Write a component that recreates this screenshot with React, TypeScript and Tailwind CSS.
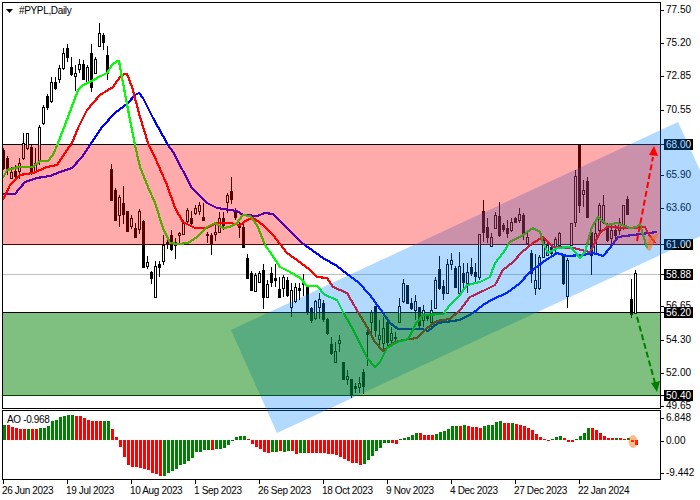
type Candle = [number, number, number, number, number];

// high, body top, body bottom, low, 1 = black body
const candles: Candle[] = [
  [148,150,168,170,1],[156,158,170,175,1],[167,172,178,179,0],[165,171,176,178,1],[158,163,171,179,0],
  [133,143,158,160,0],[133,133,148,150,0],[145,147,172,175,1],[148,163,171,173,0],[125,127,160,165,0],
  [105,107,123,125,0],[94,96,107,110,1],[77,82,101,103,0],[77,82,88,90,1],[65,68,79,83,0],
  [48,53,68,70,0],[44,48,57,62,1],[57,67,74,76,1],[65,73,76,91,0],[59,64,69,73,0],
  [60,64,79,80,1],[65,67,82,83,0],[44,53,87,92,1],[57,59,73,74,0],[23,33,46,47,0],
  [33,35,42,50,1],[46,55,73,80,1],[164,169,200,201,1],[188,190,220,221,1],[195,197,215,227,0],
  [186,203,214,224,1],[211,211,231,232,1],[215,218,226,229,0],[223,228,237,238,1],[209,211,229,234,0],
  [220,221,267,268,1],[256,262,266,269,0],[271,272,278,284,1],[261,266,297,297,0],[261,264,267,277,1],
  [235,245,261,265,0],[235,242,243,249,1],[230,235,249,251,1],[238,242,245,259,0],[232,233,235,243,0],
  [220,223,234,235,0],[208,210,221,225,0],[211,218,223,225,1],[205,208,213,215,0],[202,205,211,215,0],
  [203,217,220,221,1],[232,234,235,243,1],[233,235,244,255,1],[222,232,234,241,0],[212,218,232,232,0],
  [212,218,225,230,1],[193,195,202,213,0],[177,191,199,204,1],[208,212,217,220,1],[222,224,227,238,1],
  [223,227,247,247,1],[254,258,278,279,1],[271,273,290,291,1],[273,275,291,292,0],[271,273,282,283,0],
  [264,270,297,309,1],[280,284,297,298,0],[267,273,282,287,1],[264,278,280,287,1],[277,289,297,298,1],
  [275,277,288,297,0],[277,280,295,297,1],[283,290,307,317,0],[283,287,301,303,0],[283,288,290,300,1],
  [274,282,284,296,1],[287,287,311,315,1],[307,308,320,323,1],[300,301,318,320,0],[293,299,307,319,0],
  [300,303,319,322,1],[318,319,333,335,1],[337,344,353,355,1],[342,351,362,363,0],[335,340,343,352,0],
  [362,362,379,380,1],[370,376,379,385,0],[379,379,395,398,1],[383,386,388,393,1],[377,383,387,393,0],
  [369,372,386,394,1],[327,332,334,366,1],[310,312,322,335,0],[306,306,330,337,1],[320,335,339,349,0],
  [317,328,343,350,0],[317,322,342,349,1],[327,333,340,343,0],[332,337,338,342,1],[298,306,322,323,0],
  [279,283,301,303,0],[285,285,303,304,1],[298,303,308,310,1],[295,301,310,320,0],[307,307,325,330,1],
  [305,310,320,327,0],[315,316,318,321,1],[300,310,322,328,0],[277,280,308,309,0],[256,269,288,290,1],
  [280,286,293,300,1],[259,264,293,294,0],[253,260,264,270,0],[266,268,287,288,1],[252,266,293,295,0],
  [263,273,282,290,1],[263,272,283,293,0],[258,267,273,276,1],[263,272,276,283,1],[234,234,277,280,0],
  [200,211,232,242,1],[218,227,237,243,1],[233,237,246,247,0],[212,215,228,229,0],[202,216,235,237,1],
  [223,225,229,232,1],[220,228,233,238,1],[218,222,230,232,0],[217,218,222,223,1],[208,214,220,223,0],
  [213,215,233,240,1],[233,237,243,244,0],[250,253,273,283,1],[254,280,288,295,0],[255,257,288,290,0],
  [238,240,257,258,0],[243,245,255,256,0],[245,247,253,255,1],[237,239,247,255,0],[232,233,245,248,0],
  [255,256,283,285,1],[258,260,296,308,0],[223,223,245,246,0],[170,176,222,227,0],[145,145,205,213,1],
  [180,190,194,207,0],[177,181,217,217,1],[230,232,255,275,1],[223,233,253,254,0],[203,205,230,235,0],
  [195,205,222,224,0],[223,228,240,242,1],[224,230,238,245,0],[225,230,235,240,1],[218,222,230,235,0],
  [205,205,225,230,0],[196,199,214,215,1],[279,299,314,318,1],[270,273,313,313,0],
];

const greenLine = "3,178 7,170 19,167 33,167 40,161 48,161 53,155 58,143 68,117 78,90 83,85 90,82 97,78 107,73 112,65 117,61 119,61 123,83 130,120 135,145 140,167 148,187 155,203 163,228 170,243 178,244 188,243 197,237 207,227 215,223 223,228 230,227 237,223 243,215 250,216 257,225 265,245 272,255 280,267 290,272 300,278 307,286 317,286 325,295 337,300 343,312 347,319 355,333 367,358 375,367 380,362 387,348 397,342 408,339 417,322 423,315 443,314 450,305 460,295 467,285 480,282 490,277 495,263 503,253 510,242 523,235 533,228 540,232 543,243 548,253 557,248 570,247 575,252 580,258 585,252 592,227 598,217 607,225 617,223 630,228 637,227 640,224 643,235 647,248";
const redLine = "3,200 10,185 20,175 33,173 47,167 57,165 65,153 72,143 78,128 87,110 93,103 100,95 113,87 120,77 124,74 127,74 132,87 140,117 148,143 157,162 167,185 175,208 183,222 195,228 207,228 217,223 230,223 240,225 247,220 253,218 263,225 273,235 287,253 297,260 310,270 317,277 327,278 333,287 347,293 358,312 367,327 375,342 383,351 393,343 403,340 417,338 427,328 437,321 450,319 460,310 470,297 483,291 495,285 503,270 513,262 522,252 533,243 543,237 553,247 573,248 590,252 600,233 607,227 627,228 645,227 648,233 655,243";
const blueLine = "3,194 15,194 25,182 37,178 50,176 60,172 72,168 82,157 90,145 102,127 115,113 128,103 135,95 139,93 143,98 153,118 168,145 173,152 192,188 207,203 217,208 230,210 237,211 243,215 257,216 265,213 273,214 287,228 302,243 323,258 337,266 347,274 358,282 370,295 383,313 390,323 398,329 422,329 428,331 438,323 460,320 473,313 483,305 493,299 507,293 520,283 530,272 543,262 557,253 567,256 583,255 593,253 603,256 610,248 618,237 633,235 657,232";

const aoHeights = [
  15,15,13,12,11,11,11,11,11,12,12,14,19,20,23,24,25,25,24,24,22,20,19,19,19,19,19,11,3,-7,
  -17,-25,-27,-27,-28,-29,-30,-33,-34,-36,-36,-33,-31,-29,-25,-24,-21,-18,-12,-12,-10,-10,-10,-9,-9,-8,-5,-1,3,4,
  4,1,-4,-7,-9,-12,-13,-12,-12,-11,-12,-11,-11,-14,-13,-13,-13,-13,-13,-13,-13,-14,-14,-15,-17,-19,-21,-23,-23,-25,
  -24,-20,-16,-11,-8,-3,-3,-3,-4,1,2,3,5,7,7,5,5,5,6,8,9,11,14,14,14,15,14,13,13,12,
  14,15,15,18,19,17,17,17,16,15,14,12,10,6,3,1,-1,1,3,4,2,-2,-2,1,4,7,12,12,10,7,
  4,2,2,2,2,1,2,-2,-5,
];
const aoRuns = [1,5,1,2,9,7,2,13,12,1,8,6,2,1,2,2,2,14,7,2,5,4,6,1,1,4,5,2,1,9,3,3,4,6,1,2,1,2];
const aoColors: string[] = aoRuns.flatMap((n, k) => Array<string>(n).fill(k % 2 === 0 ? "#008000" : "#ff0000"));

const dates = ["26 Jun 2023","19 Jul 2023","10 Aug 2023","1 Sep 2023","26 Sep 2023","18 Oct 2023","9 Nov 2023","4 Dec 2023","27 Dec 2023","22 Jan 2024"];

const prices: { y: number; label: string; boxed?: boolean }[] = [
  { y: 10, label: "77.50" },{ y: 43, label: "75.20" },{ y: 76, label: "72.85" },{ y: 110, label: "70.55" },
  { y: 175, label: "65.90" },{ y: 208, label: "63.60" },{ y: 306, label: "56.65" },{ y: 340, label: "54.30" },
  { y: 373, label: "52.00" },{ y: 406, label: "49.65" },{ y: 418, label: "6.848" },{ y: 441, label: "0.00" },{ y: 473, label: "-9.442" },
  { y: 144, label: "68.00", boxed: true },{ y: 244, label: "61.00", boxed: true },{ y: 274, label: "58.88", boxed: true },
  { y: 312, label: "56.20", boxed: true },{ y: 395, label: "50.40", boxed: true },
];

export default function App() {
  return (
    <div className="relative flex h-[500px] w-[700px] overflow-hidden bg-white font-['Liberation_Sans',sans-serif] text-[10px] text-black">
      <div className="flex w-[660px] shrink-0 flex-col pl-[2px] pt-[2px] tracking-[-0.35px]">
        <div className="relative h-[407px] w-[659px] border border-black">
          <svg width={657} height={405} viewBox="3 3 657 405" className="block" shapeRendering="crispEdges">
            <line x1={3} x2={660} y1={144.5} y2={144.5} stroke="#000" />
            <line x1={3} x2={660} y1={244.5} y2={244.5} stroke="#000" />
            <line x1={3} x2={660} y1={274.5} y2={274.5} stroke="#c0c0c0" />
            <line x1={3} x2={660} y1={312.5} y2={312.5} stroke="#000" />
            <line x1={3} x2={660} y1={395.5} y2={395.5} stroke="#000" />
            {candles.map(([h, t, b, l, black], i) => {
              const x = 3.5 + 4 * i;
              return (
                <g key={i}>
                  <line x1={x} x2={x} y1={h} y2={t} stroke="#000" />
                  <line x1={x} x2={x} y1={b} y2={l} stroke="#000" />
                  <rect x={x - 1} y={t + 0.5} width={2} height={Math.max(b - t, 1)} fill={black ? "#000" : "#fff"} stroke="#000" />
                </g>
              );
            })}
            <polyline points={blueLine} fill="none" stroke="#0000ff" strokeWidth={2.2} />
            <polyline points={redLine} fill="none" stroke="#ff0000" strokeWidth={2.2} />
            <polyline points={greenLine} fill="none" stroke="#00ff00" strokeWidth={2.2} />
          </svg>
          <div className="absolute left-[3px] top-[2px] flex items-center gap-[6px] leading-[12px]">
            <svg width={7} height={4} viewBox="0 0 7 4"><path d="M0 0h7L3.5 4z" fill="#000" /></svg>
            <span>#PYPL,Daily</span>
          </div>
        </div>
        <div className="relative mt-px h-[70px] w-[659px] border border-black">
          <svg width={657} height={68} viewBox="3 411 657 68" className="block" shapeRendering="crispEdges">
            {aoHeights.map((h, i) => (
              <rect key={i} x={3 + 4 * i} y={h > 0 ? 440 - h : 440} width={3} height={Math.abs(h)} fill={aoColors[i]} />
            ))}
          </svg>
          <span className="absolute left-[4px] top-[3px] leading-[12px]">AO -0.968</span>
        </div>
        <div className="ml-px flex">
          {dates.map((d) => (
            <div key={d} className="flex w-[64px] shrink-0 flex-col">
              <span className="h-[4px] w-px bg-black" />
              <span className="-ml-px mt-px whitespace-nowrap leading-[12px]">{d}</span>
            </div>
          ))}
        </div>
      </div>

      <div className="relative flex-1">
        {prices.map((p) => (
          <div key={p.label} className="absolute left-0 flex h-[12px] items-center" style={{ top: p.y - 6 }}>
            <span className="h-px w-[4px] bg-black" />
            <span className={p.boxed ? "bg-black px-[2px] leading-[11px] text-white" : "pl-[2px] leading-[12px]"}>{p.label}</span>
          </div>
        ))}
      </div>

      {/* translucent drawing objects lying over the whole chart */}
      <svg width={700} height={500} viewBox="0 0 700 500" className="pointer-events-none absolute left-0 top-0">
        <polygon points="231,330 678,122 725,225 277,433" fill="rgb(0,130,255)" fillOpacity={0.3} />
        <rect x={3} y={145} width={657} height={100} fill="#ff0000" fillOpacity={0.33} />
        <rect x={3} y={313} width={657} height={83} fill="#008000" fillOpacity={0.5} />
        <polygon points="646,249 649,237 659,233 650,251" fill="#ff6600" fillOpacity={0.5} />
        <ellipse cx={633} cy={441.5} rx={4.5} ry={6.5} fill="#ff6600" fillOpacity={0.45} />
        <line x1={637} y1={241} x2={653} y2={157} stroke="#ff0000" strokeWidth={2} strokeDasharray="6 3" />
        <polygon points="649,155 658,156 654,146" fill="#ff0000" />
        <line x1={637} y1={317} x2={655} y2={383} stroke="#008000" strokeWidth={2} strokeDasharray="6 3" />
        <polygon points="651,383 660,381 657,392" fill="#008000" />
      </svg>
    </div>
  );
}
